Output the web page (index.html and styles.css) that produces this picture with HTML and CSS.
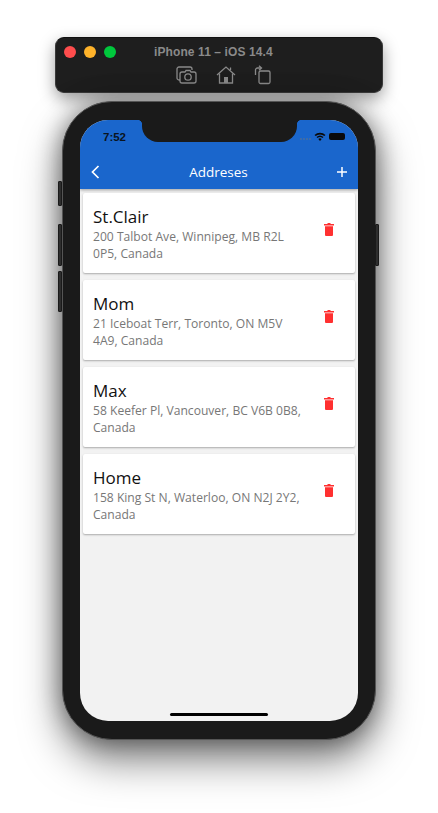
FILE: index.html
```html
<!DOCTYPE html>
<html lang="en">
<head>
  <meta charset="UTF-8" />
  <title>Addreses</title>
  <link rel="stylesheet" href="styles.css">
</head>
<body>

  <div class="toolbar">
    <div class="lights">
      <span class="light red"></span>
      <span class="light yellow"></span>
      <span class="light green"></span>
    </div>
    <div class="device-name">iPhone 11 – iOS 14.4</div>
    <div class="tools">
      <svg width="22" height="20" viewBox="0 0 22 20" fill="none" stroke="#8a8a8a" stroke-width="1.300">
        <path d="M4 15H3a2 2 0 0 1-2-2V4a2 2 0 0 1 2-2h11a2 2 0 0 1 2 2v1" />
        <path d="M6 7h3l1-1.500h4l1 1.500h3a2 2 0 0 1 2 2v7a2 2 0 0 1-2 2H6a2 2 0 0 1-2-2V9a2 2 0 0 1 2-2z" fill="#1e1e1e" />
        <circle cx="12" cy="12" r="3.200" />
      </svg>
      <svg width="20" height="20" viewBox="0 0 20 20" fill="none" stroke="#8a8a8a" stroke-width="1.300">
        <path d="M1 10l9-8 9 8" />
        <path d="M3.500 8.500V18h13V8.500" />
        <rect x="8" y="12" width="4" height="6" fill="#8a8a8a" stroke="none" />
        <path d="M14.500 5V2.500" />
      </svg>
      <svg width="18" height="20" viewBox="0 0 18 20" fill="none" stroke="#8a8a8a" stroke-width="1.300">
        <rect x="5" y="6" width="11" height="12.500" rx="1.500" />
        <path d="M1.500 10V5a2 2 0 0 1 2-2H7" />
        <path d="M5 .8L7.500 3 5 5.200" />
      </svg>
    </div>
  </div>

  <div class="phone">
    <span class="side-btn mute"></span>
    <span class="side-btn vol-up"></span>
    <span class="side-btn vol-down"></span>
    <span class="side-btn power"></span>

    <div class="screen">
      <div class="notch"></div>

      <header class="app-header">
        <div class="status-bar">
          <span class="time">7:52</span>
          <div class="status-icons">
            <span class="signal"><i></i><i></i><i></i><i></i></span>
            <svg width="12" height="9" viewBox="0 0 12 9" fill="#0a0a0a">
              <path d="M6 9L4.300 7a2.500 2.500 0 0 1 3.400 0z" />
              <path d="M3.500 6.100L2.500 5a5.200 5.200 0 0 1 7 0L8.500 6.100a3.800 3.800 0 0 0-5 0z" />
              <path d="M1.700 4.100L.5 2.900a8.200 8.200 0 0 1 11 0l-1.200 1.200a6.500 6.500 0 0 0-8.600 0z" />
            </svg>
            <span class="battery"></span>
          </div>
        </div>
        <div class="nav-bar">
          <svg class="back" width="9" height="14" viewBox="0 0 9 14" fill="none" stroke="#fff" stroke-width="1.700">
            <path d="M7.500 1L1.500 7l6 6" />
          </svg>
          <span class="nav-title">Addreses</span>
          <svg class="add" width="10" height="10" viewBox="0 0 10 10" stroke="#fff" stroke-width="1.500">
            <path d="M5 0v10M0 5h10" />
          </svg>
        </div>
      </header>

      <div class="address-list">
        <div class="address-card">
          <div class="address-info">
            <div class="address-name">St.Clair</div>
            <div class="address-text">200 Talbot Ave, Winnipeg, MB R2L 0P5, Canada</div>
          </div>
          <svg class="trash" width="10" height="13" viewBox="0 0 10 12" preserveAspectRatio="none" fill="#ff3030">
            <path d="M3.500 0h3v1H10v1.200H0V1h3.500zM1 3h8v8a1 1 0 0 1-1 1H2a1 1 0 0 1-1-1z" />
          </svg>
        </div>
        <div class="address-card">
          <div class="address-info">
            <div class="address-name">Mom</div>
            <div class="address-text">21 Iceboat Terr, Toronto, ON M5V 4A9, Canada</div>
          </div>
          <svg class="trash" width="10" height="13" viewBox="0 0 10 12" preserveAspectRatio="none" fill="#ff3030">
            <path d="M3.500 0h3v1H10v1.200H0V1h3.500zM1 3h8v8a1 1 0 0 1-1 1H2a1 1 0 0 1-1-1z" />
          </svg>
        </div>
        <div class="address-card">
          <div class="address-info">
            <div class="address-name">Max</div>
            <div class="address-text">58 Keefer Pl, Vancouver, BC V6B 0B8, Canada</div>
          </div>
          <svg class="trash" width="10" height="13" viewBox="0 0 10 12" preserveAspectRatio="none" fill="#ff3030">
            <path d="M3.500 0h3v1H10v1.200H0V1h3.500zM1 3h8v8a1 1 0 0 1-1 1H2a1 1 0 0 1-1-1z" />
          </svg>
        </div>
        <div class="address-card">
          <div class="address-info">
            <div class="address-name">Home</div>
            <div class="address-text">158 King St N, Waterloo, ON N2J 2Y2, Canada</div>
          </div>
          <svg class="trash" width="10" height="13" viewBox="0 0 10 12" preserveAspectRatio="none" fill="#ff3030">
            <path d="M3.500 0h3v1H10v1.200H0V1h3.500zM1 3h8v8a1 1 0 0 1-1 1H2a1 1 0 0 1-1-1z" />
          </svg>
        </div>
      </div>

      <div class="home-bar"></div>
    </div>
  </div>

</body>
</html>
```

FILE: styles.css
```css
* {
  box-sizing: border-box;
}
body {
  margin: 0;
  background: #fff;
  font-family: "Open Sans", sans-serif;
  height: 813px;
  overflow: hidden;
}

/* simulator title bar */
.toolbar {
  position: relative;
  width: 328px;
  height: 56px;
  margin: 37px 0 0 55px;
  padding-top: 7px;
  background: #1e1e1e;
  border: 1px solid #3a3a3a;
  border-top-color: #111;
  border-radius: 9px;
  box-shadow: 0 6px 16px rgba(0, 0, 0, 0.38);
}
.lights {
  position: absolute;
  top: 8px;
  left: 8px;
  display: flex;
  gap: 8px;
}
.light {
  width: 12px;
  height: 12px;
  border-radius: 50%;
}
.red {
  background: #ff4d4d;
}
.yellow {
  background: #ffb32a;
}
.green {
  background: #00c83c;
}
.device-name {
  padding-left: 98px;
  font-family: "Liberation Sans", sans-serif;
  font-size: 12px;
  font-weight: bold;
  line-height: 14px;
  color: #8a8a8a;
  letter-spacing: 0.1px;
}
.tools {
  display: flex;
  align-items: center;
  gap: 18px;
  margin-top: 6px;
  padding-left: 120px;
}

/* device frame */
.phone {
  position: relative;
  width: 314px;
  height: 639px;
  margin: 8px 0 0 62px;
  padding: 18px 17px;
  background: #1a1a1a;
  border: 1px solid #555;
  border-radius: 50px;
  box-shadow: 0 20px 40px rgba(0, 0, 0, 0.5), 0 0 24px rgba(0, 0, 0, 0.42);
}
.side-btn {
  position: absolute;
  width: 4px;
  background: #2e2e2e;
  border: 1px solid #1a1a1a;
  border-radius: 1px;
}
.mute {
  left: -5px;
  top: 79px;
  height: 25px;
}
.vol-up {
  left: -5px;
  top: 122px;
  height: 42px;
}
.vol-down {
  left: -5px;
  top: 169px;
  height: 41px;
}
.power {
  right: -4px;
  top: 122px;
  height: 42px;
}
.screen {
  position: relative;
  width: 278px;
  height: 601px;
  overflow: hidden;
  background: #f2f2f2;
  border-radius: 28px;
}
.notch {
  position: absolute;
  top: 0;
  left: 62px;
  width: 155px;
  height: 22px;
  background: #1a1a1a;
  border-radius: 0 0 16px 16px;
}
.notch::before,
.notch::after {
  content: "";
  position: absolute;
  top: 0;
  width: 5px;
  height: 5px;
}
.notch::before {
  left: -5px;
  background: radial-gradient(circle at 0 100%, transparent 5px, #1a1a1a 5.500px);
}
.notch::after {
  right: -5px;
  background: radial-gradient(circle at 100% 100%, transparent 5px, #1a1a1a 5.500px);
}

/* app header */
.app-header {
  height: 69px;
  background: #1a66cc;
  box-shadow: 0 1px 3px rgba(0, 0, 0, 0.35);
}
.status-bar {
  display: flex;
  justify-content: space-between;
  align-items: center;
  height: 34px;
  padding: 0 13px 0 23px;
}
.time {
  font-family: "Liberation Sans", sans-serif;
  font-size: 11.500px;
  font-weight: bold;
  color: #0a1420;
}
.status-icons {
  display: flex;
  align-items: center;
  gap: 3px;
  margin-top: -2px;
}
.signal {
  display: flex;
  gap: 1px;
  margin-top: 6px;
}
.signal i {
  width: 2px;
  height: 2px;
  background: #4a6f9f;
  border-radius: 50%;
}
.battery {
  width: 16px;
  height: 7px;
  background: #0a0a0a;
  border-radius: 2px;
}
.nav-bar {
  display: flex;
  justify-content: space-between;
  align-items: center;
  height: 35px;
  padding: 0 11px;
}
.nav-title {
  font-size: 13.500px;
  color: #fff;
}

/* address cards */
.address-list {
  display: flex;
  flex-direction: column;
  gap: 7px;
  padding: 4px 3px 0;
}
.address-card {
  display: flex;
  align-items: center;
  justify-content: space-between;
  height: 80px;
  padding: 0 21px 0 10px;
  background: #fff;
  border-radius: 2px;
  box-shadow: 0 1px 2px rgba(0, 0, 0, 0.3);
}
.address-info {
  width: 210px;
  padding-top: 2px;
}
.address-name {
  font-size: 17px;
  line-height: 22px;
  color: #111;
}
.address-text {
  font-size: 12.100px;
  line-height: 17px;
  color: #777;
}
.trash {
  margin-bottom: 7px;
}
.home-bar {
  position: absolute;
  bottom: 5px;
  left: 90px;
  width: 98px;
  height: 3px;
  background: #000;
  border-radius: 2px;
}
```
